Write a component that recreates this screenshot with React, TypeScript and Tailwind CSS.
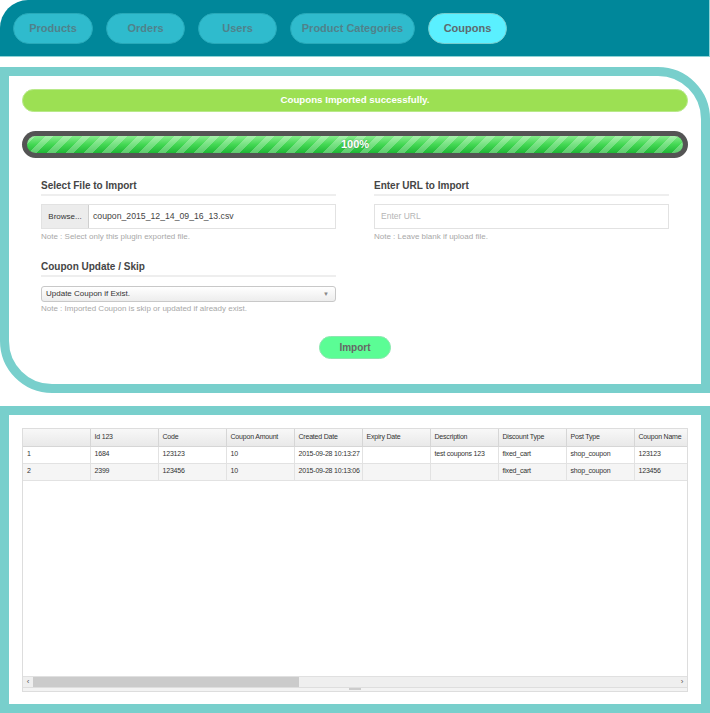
import React from "react";

const tabs = [
  { label: "Products", w: "w-[80px]", active: false },
  { label: "Orders", w: "w-[79px]", active: false },
  { label: "Users", w: "w-[79px]", active: false },
  { label: "Product Categories", w: "w-[125px]", active: false },
  { label: "Coupons", w: "w-[79px]", active: true },
];

const cols = [
  "",
  "Id 123",
  "Code",
  "Coupon Amount",
  "Created Date",
  "Expiry Date",
  "Description",
  "Discount Type",
  "Post Type",
  "Coupon Name",
];

const rows = [
  ["1", "1684", "123123", "10", "2015-09-28 10:13:27", "", "test coupons 123", "fixed_cart", "shop_coupon", "123123"],
  ["2", "2399", "123456", "10", "2015-09-28 10:13:06", "", "", "fixed_cart", "shop_coupon", "123456"],
];

export default function App() {
  return (
    <div className="w-[710px] h-[713px] bg-white overflow-hidden font-['Liberation_Sans',Arial,sans-serif]">
      {/* Header */}
      <div className="h-[57px] bg-[#00879a] rounded-tl-[28px] border-b border-r border-[#8fd3d6] flex items-start gap-[13px] pl-[13px] pt-[13px]">
        {tabs.map((t) => (
          <div
            key={t.label}
            className={`${t.w} h-[31px] rounded-full flex items-center justify-center text-[11px] font-bold border ${
              t.active
                ? "bg-[#5af0ff] text-[#5d6a6e] border-[#7cc]"
                : "bg-[#2fbbcd] text-[#4f828b] border-[#27a9b9]"
            }`}
          >
            {t.label}
          </div>
        ))}
      </div>

      <div className="h-[10px]" />

      {/* Import panel */}
      <div className="h-[326px] border-[9px] border-[#78cfcc] rounded-tr-[52px] rounded-bl-[52px] bg-white px-[13px] pt-[13px] flex flex-col">
        <div className="h-[23px] rounded-full bg-[#9ce053] border border-[#b8e98a] flex items-center justify-center text-white text-[9.7px] font-bold">
          Coupons Imported successfully.
        </div>

        <div className="mt-[19px] h-[27px] rounded-full bg-[#545454] p-[5px]">
          <div className="h-full rounded-full relative overflow-hidden [background-image:repeating-linear-gradient(135deg,rgba(255,255,255,0.28)_0px,rgba(255,255,255,0.28)_6px,transparent_6px,transparent_13px),linear-gradient(to_bottom,#86ec8c,#43d853_50%,#1fb636)]">
            <div className="absolute inset-0 flex items-center justify-center text-white text-[11px] font-bold [text-shadow:0_0_2px_rgba(0,0,0,0.35)]">
              100%
            </div>
          </div>
        </div>

        <div className="mt-[21px] px-[19px] grid grid-cols-2 gap-x-[38px]">
          {/* Left column */}
          <div className="flex flex-col">
            <div className="text-[10px] font-bold text-[#454545] leading-[14px] pb-[1px] border-b-2 border-[#eeeeee]">
              Select File to Import
            </div>
            <div className="mt-[8px] h-[25px] border border-[#e2e2e2] flex items-center">
              <div className="h-full w-[47px] bg-[#ececec] border-r border-[#cfcfcf] flex items-center justify-center text-[8px] text-[#333]">
                Browse...
              </div>
              <div className="pl-[4px] text-[8.7px] text-[#444]">coupon_2015_12_14_09_16_13.csv</div>
            </div>
            <div className="mt-[3px] text-[8px] leading-[10px] text-[#a8a8a8]">
              Note : Select only this plugin exported file.
            </div>

            <div className="mt-[18px] text-[10px] font-bold text-[#454545] leading-[14px] pb-[1px] border-b-2 border-[#eeeeee]">
              Coupon Update / Skip
            </div>
            <div className="mt-[9px] h-[16px] rounded-[3px] border border-[#c8c8c8] bg-[linear-gradient(#ffffff,#ededed)] flex items-center justify-between px-[4px]">
              <span className="text-[8px] text-[#333]">Update Coupon if Exist.</span>
              <span className="text-[6px] text-[#888] pr-[2px]">▼</span>
            </div>
            <div className="mt-[2px] text-[8px] leading-[10px] text-[#a8a8a8]">
              Note : Imported Coupon is skip or updated if already exist.
            </div>
          </div>

          {/* Right column */}
          <div className="flex flex-col">
            <div className="text-[10px] font-bold text-[#454545] leading-[14px] pb-[1px] border-b-2 border-[#eeeeee]">
              Enter URL to Import
            </div>
            <div className="mt-[8px] h-[25px] border border-[#e2e2e2] flex items-center pl-[6px] text-[8.5px] text-[#b5b5b5]">
              Enter URL
            </div>
            <div className="mt-[3px] text-[8px] leading-[10px] text-[#a8a8a8]">
              Note : Leave blank if upload file.
            </div>
          </div>
        </div>

        <div className="mt-[22px] flex justify-center">
          <div className="w-[72px] h-[23px] rounded-full bg-[#5bfd95] border border-[#8de6b0] flex items-center justify-center text-[10px] font-bold text-[#666]">
            Import
          </div>
        </div>
      </div>

      <div className="h-[13px]" />

      {/* Data panel */}
      <div className="h-[307px] border-[9px] border-[#78cfcc] bg-white px-[13px] pt-[13px]">
        <div className="h-[264px] border border-[#dddddd] flex flex-col">
          <div className="flex-1 overflow-hidden">
            <table className="border-collapse table-fixed w-[679px] text-[7px] tracking-[-0.2px] text-[#333]">
              <colgroup>
                <col className="w-[67px]" />
                {cols.slice(1).map((c) => (
                  <col key={c} className="w-[68px]" />
                ))}
              </colgroup>
              <thead>
                <tr className="h-[17px] bg-[linear-gradient(#f8f8f8,#e9e9e9)]">
                  {cols.map((c, i) => (
                    <th
                      key={i}
                      className="font-normal text-left pl-[4px] border-r border-b border-[#d6d6d6] whitespace-nowrap overflow-hidden"
                    >
                      {c}
                    </th>
                  ))}
                </tr>
              </thead>
              <tbody>
                {rows.map((r, ri) => (
                  <tr key={ri} className={`h-[17px] ${ri === 1 ? "bg-[#f5f5f5]" : "bg-white"}`}>
                    {r.map((cell, ci) => (
                      <td
                        key={ci}
                        className="pl-[4px] border-r border-b border-[#e2e2e2] whitespace-nowrap overflow-hidden"
                      >
                        {cell}
                      </td>
                    ))}
                  </tr>
                ))}
              </tbody>
            </table>
          </div>
          {/* Scrollbar */}
          <div className="h-[11px] bg-[#efefef] border-t border-[#e0e0e0] flex items-center">
            <div className="w-[10px] h-full flex items-center justify-center text-[8px] text-[#555] leading-none">‹</div>
            <div className="w-[266px] h-full bg-[#cbcbcb]" />
            <div className="flex-1" />
            <div className="w-[10px] h-full flex items-center justify-center text-[8px] text-[#555] leading-none">›</div>
          </div>
          <div className="h-[4px] bg-[#f3f3f3] border-t border-[#dedede] flex justify-center">
            <div className="w-[12px] h-[2px] bg-[#cccccc]" />
          </div>
        </div>
      </div>
    </div>
  );
}
